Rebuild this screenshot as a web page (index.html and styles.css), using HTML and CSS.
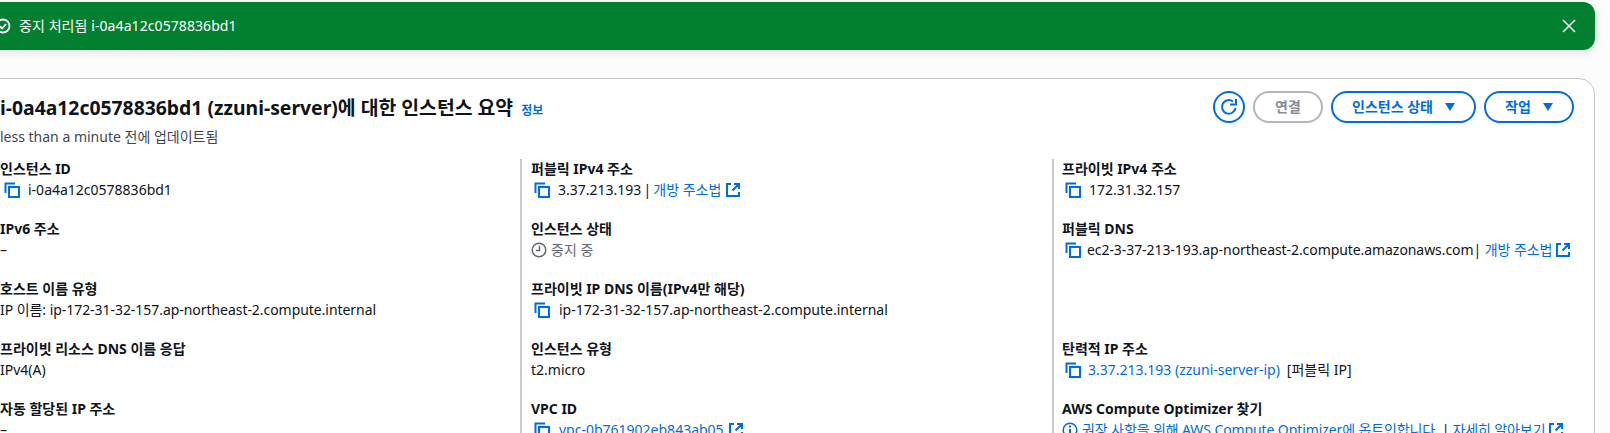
FILE: index.html
```html
<!DOCTYPE html>
<html lang="ko">
<head>
<meta charset="utf-8">
<title>인스턴스 요약</title>
<link rel="stylesheet" href="styles.css">
</head>
<body>
<svg class="defs" width="0" height="0">
  <symbol id="copy" viewBox="0 0 16 16"><path d="M1.500 11V1.500H11" fill="none" stroke="currentColor" stroke-width="2"/><rect x="5" y="5" width="10" height="10" fill="none" stroke="currentColor" stroke-width="2"/></symbol>
  <symbol id="ext" viewBox="0 0 14 14"><path d="M5 1H1v12h12V9M8 1h5v5M13 1L6.500 7.500" fill="none" stroke="currentColor" stroke-width="2"/></symbol>
</svg>
<div class="page">
  <div class="flash">
    <svg class="flash-icon" viewBox="0 0 16 16"><circle cx="8" cy="8" r="6.500" fill="none" stroke="currentColor" stroke-width="1.800"/><path d="M4.800 8.200l2.300 2.300 4-4.500" fill="none" stroke="currentColor" stroke-width="1.800"/></svg>
    <span class="flash-text">중지 처리됨 i-0a4a12c0578836bd1</span>
    <svg class="flash-close" viewBox="0 0 14 14"><path d="M1 1l12 12M13 1L1 13" fill="none" stroke="currentColor" stroke-width="1.700"/></svg>
  </div>
  <section class="card">
    <header class="card-head">
      <div>
        <h1 class="title">i-0a4a12c0578836bd1 (zzuni-server)에 대한 인스턴스 요약 <a class="info">정보</a></h1>
        <p class="sub">less than a minute 전에 업데이트됨</p>
      </div>
      <div class="actions">
        <button class="btn icon-btn"><svg viewBox="0 0 18 18"><path d="M15.500 10A6.800 6.800 0 1 1 13 3.600" fill="none" stroke="currentColor" stroke-width="2"/><path d="M10 6.500h6V1" fill="none" stroke="currentColor" stroke-width="2"/></svg></button>
        <button class="btn disabled">연결</button>
        <button class="btn wide">인스턴스 상태<i class="caret"></i></button>
        <button class="btn narrow">작업<i class="caret"></i></button>
      </div>
    </header>
    <div class="grid">
      <div class="col col-first">
        <div class="item"><div class="label">인스턴스 ID</div><div class="value"><svg class="copy copy-first"><use href="#copy"/></svg><span class="gap8">i-0a4a12c0578836bd1</span></div></div>
        <div class="item"><div class="label">IPv6 주소</div><div class="value">–</div></div>
        <div class="item"><div class="label">호스트 이름 유형</div><div class="value tight">IP 이름: ip-172-31-32-157.ap-northeast-2.compute.internal</div></div>
        <div class="item"><div class="label">프라이빗 리소스 DNS 이름 응답</div><div class="value">IPv4(A)</div></div>
        <div class="item"><div class="label">자동 할당된 IP 주소</div><div class="value">–</div></div>
      </div>
      <div class="col">
        <div class="item"><div class="label">퍼블릭 IPv4 주소</div><div class="value"><svg class="copy"><use href="#copy"/></svg><span class="gap8">3.37.213.193<span class="sep"> | </span><a>개방 주소법</a></span><svg class="ext ext-wide"><use href="#ext"/></svg></div></div>
        <div class="item"><div class="label">인스턴스 상태</div><div class="value muted"><svg class="clock" viewBox="0 0 16 16"><circle cx="8" cy="8" r="6.800" fill="none" stroke="currentColor" stroke-width="1.500"/><path d="M8.500 3.800v4.700H4.800" fill="none" stroke="currentColor" stroke-width="1.500"/></svg>중지 중</div></div>
        <div class="item"><div class="label">프라이빗 IP DNS 이름(IPv4만 해당)</div><div class="value"><svg class="copy"><use href="#copy"/></svg><span class="gap9">ip-172-31-32-157.ap-northeast-2.compute.internal</span></div></div>
        <div class="item"><div class="label">인스턴스 유형</div><div class="value">t2.micro</div></div>
        <div class="item"><div class="label">VPC ID</div><div class="value"><svg class="copy"><use href="#copy"/></svg><a class="gap9">vpc-0b761902eb843ab05</a><svg class="ext ext-wide"><use href="#ext"/></svg></div></div>
      </div>
      <div class="col col-last">
        <div class="item"><div class="label">프라이빗 IPv4 주소</div><div class="value"><svg class="copy"><use href="#copy"/></svg><span class="gap8">172.31.32.157</span></div></div>
        <div class="item"><div class="label">퍼블릭 DNS</div><div class="value"><svg class="copy"><use href="#copy"/></svg><span class="gap6 tighter">ec2-3-37-213-193.ap-northeast-2.compute.amazonaws.com| <a>개방 주소법</a></span><svg class="ext"><use href="#ext"/></svg></div></div>
        <div class="item"></div>
        <div class="item"><div class="label">탄력적 IP 주소</div><div class="value"><svg class="copy"><use href="#copy"/></svg><a class="gap7">3.37.213.193 (zzuni-server-ip)</a><span class="tag">[퍼블릭 IP]</span></div></div>
        <div class="item"><div class="label">AWS Compute Optimizer 찾기</div><div class="value tightest"><svg class="clock info-icon" viewBox="0 0 16 16"><circle cx="8" cy="8" r="6.800" fill="none" stroke="currentColor" stroke-width="1.500"/><path d="M8 7v5M8 3.500v2" fill="none" stroke="currentColor" stroke-width="2"/></svg><a>권장 사항을 위해 AWS Compute Optimizer에 옵트인합니다.</a><span class="bar">|</span><a>자세히 알아보기</a><svg class="ext"><use href="#ext"/></svg></div></div>
      </div>
    </div>
  </section>
</div>
</body>
</html>
```
FILE: styles.css
```css
* { box-sizing: border-box; }
html, body { margin: 0; height: 433px; overflow: hidden; }
body {
  background: #fcfcfd;
  color: #0f141a;
  font-family: "Noto Sans", "Noto Sans CJK KR", sans-serif;
  font-size: 14px;
  line-height: 20px;
}
.defs { display: block; height: 0; }
.page { margin-left: -20px; width: 1615px; padding-top: 2px; }
.flash {
  height: 48px;
  background: #037f30;
  color: #fff;
  border-radius: 12px;
  box-shadow: 0 2px 10px rgba(0, 7, 22, .12);
  display: flex;
  align-items: center;
  padding: 0 19px 0 15px;
}
.flash-icon { width: 16px; height: 16px; margin-right: 8px; flex: none; }
.flash-text { flex: 1; letter-spacing: .08px; }
.flash-close { width: 14px; height: 14px; color: #e8e8ea; }
.card {
  margin-top: 28px;
  background: #fff;
  border: 1px solid #c6c6cd;
  border-radius: 16px;
  height: 400px;
  padding: 0 20px 0 19px;
}
.card-head { display: flex; justify-content: space-between; padding-top: 12px; height: 80px; }
.title { margin: 5px 0 0; font-size: 19.350px; line-height: 24px; font-weight: 700; }
.info { font-size: 12px; font-weight: 700; color: #006ce0; margin-left: 3px; }
.sub { margin: 5px 0 0; font-size: 14px; line-height: 18px; color: #424650; }
.actions { display: flex; gap: 8px; align-items: flex-start; }
.btn {
  height: 32px;
  border: 2px solid #006ce0;
  border-radius: 16px;
  background: #fff;
  color: #006ce0;
  font: 700 14px/16px "Noto Sans", "Noto Sans CJK KR", sans-serif;
  display: flex;
  align-items: center;
  justify-content: center;
  padding: 0;
}
.icon-btn { width: 32px; }
.icon-btn svg { width: 18px; height: 18px; }
.disabled { width: 70px; border-color: #b4b4bb; color: #8c8c94; }
.wide { width: 145px; }
.narrow { width: 90px; }
.caret {
  width: 0;
  height: 0;
  margin-left: 12px;
  border-left: 5.500px solid transparent;
  border-right: 5.500px solid transparent;
  border-top: 8px solid #006ce0;
}
.grid { display: grid; grid-template-columns: 520px 532px 497px; }
.col { border-left: 2px solid #c9c9cf; padding-left: 9px; }
.col-first { border-left: 0; padding-left: 0; }
.col-last { padding-left: 8px; }
.item { height: 60px; }
.label { font-weight: 700; font-size: 14px; height: 21px; }
.value { font-size: 14px; height: 20px; display: flex; align-items: center; white-space: pre; }
a { color: #006ce0; }
.copy { width: 16px; height: 16px; color: #006ce0; margin-left: 3px; flex: none; }
.copy-first { margin-left: 4px; }
.gap9 { margin-left: 9px; }
.gap8 { margin-left: 8px; }
.gap7 { margin-left: 7px; }
.gap6 { margin-left: 6px; }
.ext { width: 14px; height: 14px; color: #006ce0; margin-left: 4px; flex: none; }
.ext-wide { margin-left: 5px; }
.muted { color: #656871; }
.clock { width: 16px; height: 16px; margin-right: 4px; flex: none; }
.info-icon { color: #006ce0; }
.tag { margin-left: 7px; }
.tight { letter-spacing: -.05px; }
.tighter { letter-spacing: -.07px; }
.tightest { letter-spacing: -.1px; }
.sep { margin: 0 -1.500px; }
.bar { margin: 0 3px; }
```
